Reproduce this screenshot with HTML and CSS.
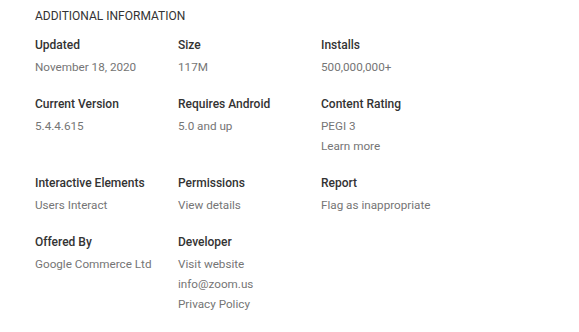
FILE: index.html
```html
<!DOCTYPE html>
<html lang="en">
<head>
    <meta charset="UTF-8">
    <meta name="viewport" content="width=device-width, initial-scale=1.0">
    <title>Additional Information</title>
    <link rel="stylesheet" href="styles.css">
</head>
<body>
    <div class="details">
        <h2 class="details-title">Additional Information</h2>
        <div class="info-grid">
            <div class="info-item">
                <div class="info-label">Updated</div>
                <div class="info-value">November 18, 2020</div>
            </div>
            <div class="info-item">
                <div class="info-label">Size</div>
                <div class="info-value">117M</div>
            </div>
            <div class="info-item">
                <div class="info-label">Installs</div>
                <div class="info-value">500,000,000+</div>
            </div>

            <div class="info-item">
                <div class="info-label">Current Version</div>
                <div class="info-value">5.4.4.615</div>
            </div>
            <div class="info-item">
                <div class="info-label">Requires Android</div>
                <div class="info-value">5.0 and up</div>
            </div>
            <div class="info-item">
                <div class="info-label">Content Rating</div>
                <div class="info-value">PEGI 3</div>
                <div class="info-value"><a href="#">Learn more</a></div>
            </div>

            <div class="info-item">
                <div class="info-label">Interactive Elements</div>
                <div class="info-value">Users Interact</div>
            </div>
            <div class="info-item">
                <div class="info-label">Permissions</div>
                <div class="info-value"><a href="#">View details</a></div>
            </div>
            <div class="info-item">
                <div class="info-label">Report</div>
                <div class="info-value"><a href="#">Flag as inappropriate</a></div>
            </div>

            <div class="info-item">
                <div class="info-label">Offered By</div>
                <div class="info-value">Google Commerce Ltd</div>
            </div>
            <div class="info-item">
                <div class="info-label">Developer</div>
                <div class="info-value"><a href="#">Visit website</a></div>
                <div class="info-value"><a href="#">info@zoom.us</a></div>
                <div class="info-value"><a href="#">Privacy Policy</a></div>
            </div>
        </div>
    </div>
</body>
</html>
```

FILE: styles.css
```css
body {
    margin: 0;
    background: #fff;
    font-family: Roboto, Arial, sans-serif;
}
.details {
    padding: 6px 35px 0;
}
.details-title {
    margin: 0 0 9px;
    font-size: 12px;
    font-weight: 400;
    line-height: 20px;
    text-transform: uppercase;
    color: #333;
}
.info-grid {
    display: grid;
    grid-template-columns: 143px 143px 143px;
    row-gap: 17px;
}
.info-label {
    font-size: 12px;
    font-weight: 500;
    line-height: 20px;
    color: #333;
    margin-bottom: 2px;
}
.info-value {
    font-size: 11.7px;
    line-height: 20px;
    color: #757575;
}
.info-value a {
    color: #757575;
    text-decoration: none;
}
```
